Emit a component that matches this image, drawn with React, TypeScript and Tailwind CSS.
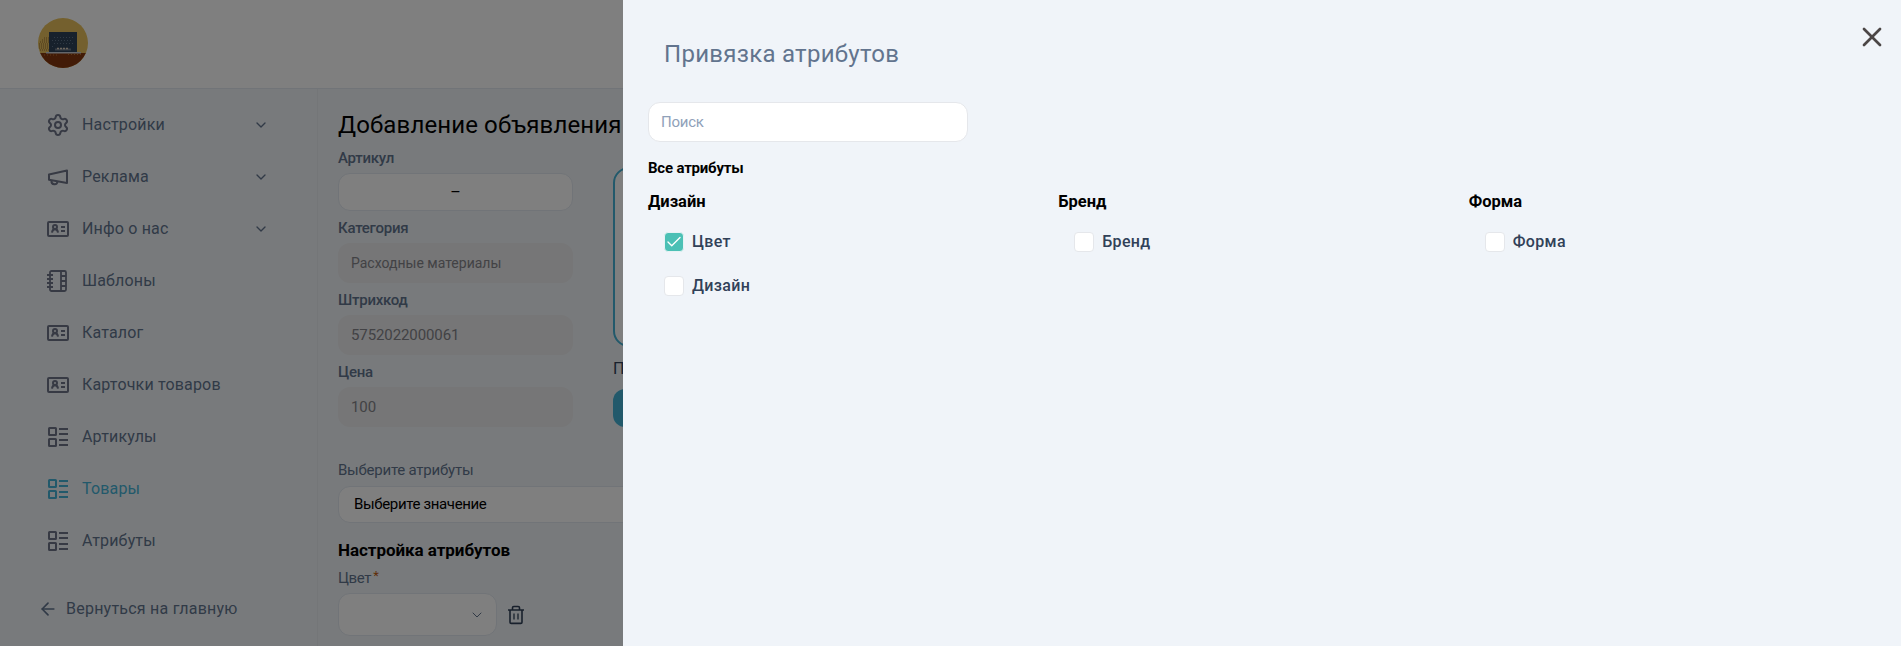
import { useState, type ReactNode } from "react"
import { ArrowLeft, Check, ChevronDown, Settings, X } from "lucide-react"
import clsx from "clsx"

type NavItem = {
  label: string
  icon: ReactNode
  expandable?: boolean
  active?: boolean
}

type AttributeGroup = {
  title: string
  items: string[]
}

const MegaphoneIcon = () => (
  <svg width="22" height="22" viewBox="0 0 22 22" fill="none" stroke="currentColor" strokeWidth="2">
    <path d="M2 8.5 20 4.5V17L2 13.8Z" strokeLinejoin="round" />
    <path d="M4.5 14.5v.5a3 3 0 0 0 6 .5" />
  </svg>
)

const CardIcon = () => (
  <svg width="22" height="22" viewBox="0 0 22 22" fill="none" stroke="currentColor" strokeWidth="2">
    <rect x="1" y="4" width="20" height="14" rx="1" />
    <circle cx="8" cy="9" r="2" />
    <path d="M5 14.7c.2-2.3 1.3-3.5 3-3.5s2.8 1.2 3 3.5M14 9h4M14 13h4" />
  </svg>
)

const NotebookIcon = () => (
  <svg width="22" height="22" viewBox="0 0 22 22" fill="none" stroke="currentColor" strokeWidth="1.8">
    <rect x="3" y="1" width="16" height="20" rx="1.5" />
    <path d="M14 1v20M14 6h5M14 11h5M14 16h5M0 5h6M0 9h6M0 13h6M0 17h6" />
  </svg>
)

const ListIcon = () => (
  <svg width="22" height="22" viewBox="0 0 22 22" fill="none" stroke="currentColor" strokeWidth="2">
    <rect x="2" y="2" width="7" height="7" rx="0.5" />
    <rect x="2" y="13" width="7" height="7" rx="0.5" />
    <path d="M12 3h9M12 8h9M12 14h9M12 19h9" />
  </svg>
)

const TrashIcon = () => (
  <svg width="16" height="20" viewBox="0 0 16 20" fill="none" stroke="currentColor" strokeWidth="1.6">
    <path d="M0 5h16M4.5 5V2.8c0-.9.5-1.3 1.3-1.3h4.400c.8 0 1.300.4 1.300 1.300V5M2 5v12.200c0 .8.400 1.200 1.200 1.200h9.600c.8 0 1.200-.4 1.200-1.200V5" />
    <path d="M6 8.5v6M10 8.5v6" strokeWidth="1.3" />
  </svg>
)

const Avatar = () => (
  <svg width="50" height="50" viewBox="0 0 50 50" className="rounded-full">
    <rect width="50" height="50" fill="#e8c15c" />
    <path d="M2 24h9M4 22h7M6 20h5M1 26h10M1 28h10M1 30h10M2 32h9" stroke="#9a6f32" strokeDasharray="1 1" />
    <rect y="35" width="50" height="15" fill="#85370f" />
    <path d="M6 37h14M30 36.5h15" stroke="#b8742f" strokeDasharray="1 2" />
    <rect x="11" y="14" width="28" height="20" fill="#2f4258" />
    <path d="M16 19.5h20M14 22.5h20M16 25.5h20M14 28.5h2" stroke="#60758a" strokeWidth="1" strokeDasharray="1 2" />
    <path d="M17 31.5h16" stroke="#6f7a88" strokeWidth="2" />
    <path d="M19 30.5h12" stroke="#d9cdbd" strokeWidth="1.5" strokeDasharray="2 1" />
    <rect x="8" y="34" width="35" height="1.5" fill="#c8cdd4" />
  </svg>
)

const navItems: NavItem[] = [
  { label: "Настройки", icon: <Settings size={24} />, expandable: true },
  { label: "Реклама", icon: <MegaphoneIcon />, expandable: true },
  { label: "Инфо о нас", icon: <CardIcon />, expandable: true },
  { label: "Шаблоны", icon: <NotebookIcon /> },
  { label: "Каталог", icon: <CardIcon /> },
  { label: "Карточки товаров", icon: <CardIcon /> },
  { label: "Артикулы", icon: <ListIcon /> },
  { label: "Товары", icon: <ListIcon />, active: true },
  { label: "Атрибуты", icon: <ListIcon /> },
]

const attributeGroups: AttributeGroup[] = [
  { title: "Дизайн", items: ["Цвет", "Дизайн"] },
  { title: "Бренд", items: ["Бренд"] },
  { title: "Форма", items: ["Форма"] },
]

const Sidebar = () => (
  <aside className="flex w-[318px] shrink-0 flex-col border-r border-[#e9edf1] pt-2.5 text-slate-500">
    <nav className="flex flex-col">
      {navItems.map((item) => (
        <a
          key={item.label}
          className={clsx("flex h-13 items-center pl-[46px] pr-12", item.active && "text-[#45b3d6]")}
        >
          <span className={clsx("flex w-6 justify-center", !item.active && "text-[#6e7488]")}>{item.icon}</span>
          <span className="ml-3 grow text-base tracking-[0.17px]">{item.label}</span>
          {item.expandable && <ChevronDown size={16} />}
        </a>
      ))}
    </nav>
    <a className="mt-[30px] flex items-center pl-[38px]">
      <ArrowLeft size={20} />
      <span className="ml-2 text-base tracking-[0.23px]">Вернуться на главную</span>
    </a>
  </aside>
)

const DisabledField = ({ label, value }: { label: string; value: string }) => (
  <div className="flex h-18 flex-col">
    <label className="h-8 pt-[5px] text-[15px] leading-6 font-medium tracking-[-0.25px] text-slate-500">{label}</label>
    <div
      className={clsx(
        "flex h-10 items-center rounded-xl bg-[#ececee] px-[13px] text-[#85858a]",
        /^\d+$/.test(value) ? "text-[15px] tracking-[-0.1px]" : "text-sm"
      )}
    >
      {value}
    </div>
  </div>
)

const ProductForm = () => (
  <main className="flex grow flex-col pl-5 pt-5">
    <h1 className="h-9 text-2xl leading-8 tracking-[0.12px] whitespace-nowrap text-black">Добавление объявления</h1>
    <div className="flex gap-10">
      <div className="flex w-[235px] flex-col">
        <label className="h-7 pt-px text-[15px] leading-6 font-medium tracking-[-0.25px] text-slate-500">Артикул</label>
        <div className="flex h-[38px] items-center justify-center rounded-xl border border-slate-200 bg-white pt-0.5 text-black">
          –
        </div>
        <DisabledField label="Категория" value="Расходные материалы" />
        <DisabledField label="Штрихкод" value="5752022000061" />
        <DisabledField label="Цена" value="100" />
      </div>
      <div className="flex w-[400px] flex-col pt-[22px]">
        <div className="h-[180px] rounded-2xl border-2 border-[#45b3d6] bg-white" />
        <p className="mt-2.5 text-base leading-6 text-slate-700">Превью</p>
        <div className="mt-2 h-[38px] w-40 rounded-xl bg-[#45b3d6]" />
      </div>
    </div>
    <label className="mt-[31px] h-[28px] text-[15px] leading-6 tracking-[-0.23px] text-slate-500">
      Выберите атрибуты
    </label>
    <div className="flex h-[37px] items-center rounded-xl border border-slate-200 bg-white px-[15px] text-[15px] tracking-[-0.35px] text-black">
      Выберите значение
    </div>
    <h2 className="mt-[15px] h-[29px] text-[17px] leading-6 font-bold tracking-[-0.05px] text-black">Настройка атрибутов</h2>
    <label className="h-[26px] pt-px text-[15px] leading-5 tracking-[-0.35px] text-slate-500">
      Цвет<span className="ml-0.5 align-top text-[13px] leading-4 text-[#c05a10]">*</span>
    </label>
    <div className="flex items-center gap-[11px]">
      <div className="flex h-[43px] w-[159px] items-center justify-end rounded-xl border border-slate-200 bg-white pr-[11px] text-slate-500">
        <ChevronDown size={16} strokeWidth={1.5} />
      </div>
      <span className="text-slate-700">
        <TrashIcon />
      </span>
    </div>
  </main>
)

export default function App() {
  const [selected, setSelected] = useState<string[]>(["Цвет"])
  const [query, setQuery] = useState("")

  const toggle = (name: string) =>
    setSelected((prev) => (prev.includes(name) ? prev.filter((n) => n !== name) : [...prev, name]))

  return (
    <div className="relative flex h-screen w-full flex-col overflow-hidden bg-slate-100 font-['Roboto',sans-serif]">
      <header className="flex h-[89px] shrink-0 items-start border-b border-slate-200 bg-white pl-[38px] pt-[18px]">
        <Avatar />
      </header>
      <div className="flex min-h-0 grow">
        <Sidebar />
        <ProductForm />
      </div>

      {/* Drawer over the dimmed page */}
      <div className="absolute inset-0 flex justify-end bg-black/50">
        <section className="flex w-[1278px] flex-col bg-[#f0f4f9] pl-[25px] pr-[22px] pt-[38px]">
          <div className="flex h-16 justify-between">
            <h2 className="pl-4 text-2xl leading-8 tracking-[0.27px] text-slate-500">Привязка атрибутов</h2>
            <button type="button" aria-label="Закрыть" className="-mt-[17px] -mr-[9px] h-8 w-8 text-[#4b4646]">
              <X size={32} strokeWidth={2} />
            </button>
          </div>
          <input
            value={query}
            onChange={(e) => setQuery(e.target.value)}
            placeholder="Поиск"
            className="h-10 w-80 shrink-0 rounded-xl border border-gray-200 bg-white px-3 text-[15px] tracking-[-0.25px] text-slate-700 outline-none placeholder:text-slate-400"
          />
          <p className="mt-4 text-[15px] leading-5 font-bold tracking-[-0.2px] text-black">Все атрибуты</p>
          <div className="mt-3 grid grid-cols-3">
            {attributeGroups.map((group) => (
              <div key={group.title} className="flex flex-col">
                <h3 className="mb-[6px] text-[16.5px] leading-6 font-bold text-black">{group.title}</h3>
                {group.items.map((name) => {
                  const checked = selected.includes(name)
                  return (
                    <button
                      key={name}
                      type="button"
                      onClick={() => toggle(name)}
                      className="flex h-11 items-center gap-2 pl-4"
                    >
                      <span
                        className={clsx(
                          "flex size-5 items-center justify-center rounded border",
                          checked ? "border-[#e6f3f4] bg-[#4bc0b5] text-white" : "border-gray-200 bg-white"
                        )}
                      >
                        {checked && <Check size={18} strokeWidth={1.8} className="shrink-0" />}
                      </span>
                      <span className="text-base font-medium tracking-[0.35px] text-slate-700">{name}</span>
                    </button>
                  )
                })}
              </div>
            ))}
          </div>
        </section>
      </div>
    </div>
  )
}
